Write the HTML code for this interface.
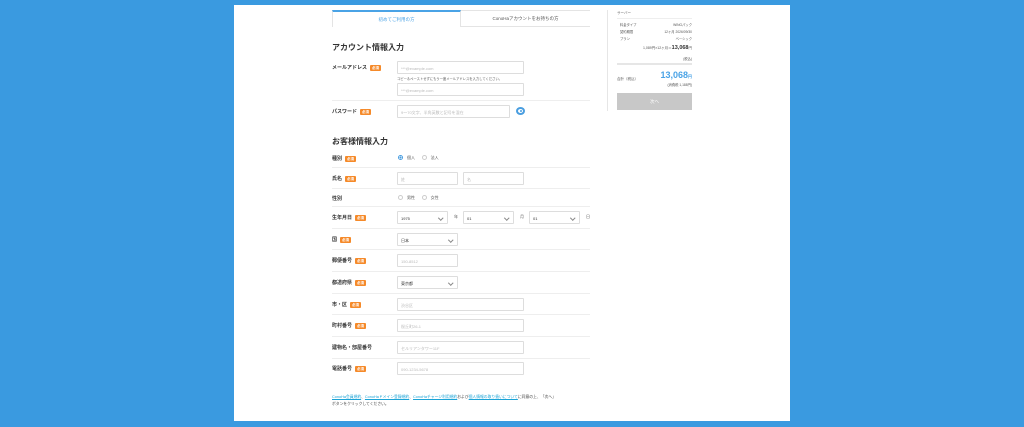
<!DOCTYPE html>
<html><head><meta charset="utf-8"><style>
*{margin:0;padding:0;box-sizing:border-box}
body{width:1024px;height:427px;background:#3a9ae0;position:relative;overflow:hidden;font-family:"Liberation Sans","Noto Sans CJK JP",sans-serif;color:#333}
.p{position:absolute;left:234px;top:5px;width:556px;height:416px;background:#fff}
.a{position:absolute;white-space:nowrap}
.lb{font-size:5px;font-weight:bold;color:#333}
.bd{display:inline-block;background:#f58a2a;color:#fff;font-size:3.5px;padding:1px 2px;margin-left:3px;border-radius:1px;vertical-align:middle;line-height:4px}
.in{position:absolute;height:13px;border:1px solid #ddd;border-radius:1px;font-size:4px;color:#bbb;padding:3.5px 3px;background:#fff}
.sel{color:#333}
.sel:after{content:"";position:absolute;right:5px;top:3.5px;width:2.5px;height:2.5px;border-right:1px solid #888;border-bottom:1px solid #888;transform:rotate(45deg)}
.hl{position:absolute;left:332px;width:258px;height:1px;background:#eee}
.h{font-size:8px;font-weight:bold;color:#333}
.rd{display:inline-block;width:5px;height:5px;border:1px solid #ccc;border-radius:50%;vertical-align:middle;margin-right:4px}
.sm{font-size:4px;color:#555}
.ln{color:#1ba3d6;text-decoration:underline}
</style></head><body>
<div class="p"></div>
<div class="a" style="left:332px;top:10px;width:129px;height:17px;border:1px solid #e4e4e4;border-top:2px solid #4aa3e6;border-bottom:none;font-size:4.5px;color:#4aa3e6;text-align:center;line-height:15px">初めてご利用の方</div>
<div class="a" style="left:461px;top:10px;width:129px;height:17px;border-top:1px solid #e4e4e4;border-bottom:1px solid #e4e4e4;font-size:4.5px;color:#555;text-align:center;line-height:16px;background:#fff">ConoHaアカウントをお持ちの方</div>
<div class="a h" style="left:332px;top:42px">アカウント情報入力</div>
<div class="a lb" style="left:332px;top:64px">メールアドレス<span class="bd">必須</span></div>
<div class="in" style="left:397px;top:61px;width:127px">***@example.com</div>
<div class="a" style="left:397px;top:76px;font-size:3.3px;color:#555">コピー＆ペーストせずにもう一度メールアドレスを入力してください。</div>
<div class="in" style="left:397px;top:83px;width:127px">***@example.com</div>
<div class="hl" style="top:100px"></div>
<div class="a lb" style="left:332px;top:108px">パスワード<span class="bd">必須</span></div>
<div class="in" style="left:397px;top:105px;width:113px">9～70文字、半角英数と記号を混在</div>
<div class="a" style="left:516px;top:107px;width:9px;height:8px;border-radius:50%;background:#4a9ee0"><div style="position:absolute;left:2px;top:2px;width:5px;height:4px;border-radius:50%;background:#fff"></div><div style="position:absolute;left:3.5px;top:3px;width:2px;height:2px;border-radius:50%;background:#4a9ee0"></div></div>
<div class="a h" style="left:332px;top:136px">お客様情報入力</div>

<div class="a lb" style="left:332px;top:155px">種別<span class="bd">必須</span></div>
<div class="a sm" style="left:398px;top:155px"><span class="rd" style="border:1.5px solid #4a9ee0;background:radial-gradient(#4a9ee0 40%,#fff 45%)"></span>個人&nbsp;&nbsp;&nbsp;&nbsp;&nbsp;&nbsp;<span class="rd"></span>法人</div>
<div class="hl" style="top:167px"></div>
<div class="a lb" style="left:332px;top:175px">氏名<span class="bd">必須</span></div>
<div class="in" style="left:397px;top:172px;width:61px">姓</div>
<div class="in" style="left:463px;top:172px;width:61px">名</div>
<div class="hl" style="top:188px"></div>
<div class="a lb" style="left:332px;top:195px">性別</div>
<div class="a sm" style="left:398px;top:195px"><span class="rd"></span>男性&nbsp;&nbsp;&nbsp;&nbsp;&nbsp;&nbsp;<span class="rd"></span>女性</div>
<div class="hl" style="top:206px"></div>
<div class="a lb" style="left:332px;top:214px">生年月日<span class="bd">必須</span></div>
<div class="in sel" style="left:397px;top:211px;width:51px">1975</div>
<div class="a sm" style="left:454px;top:214px">年</div>
<div class="in sel" style="left:463px;top:211px;width:51px">01</div>
<div class="a sm" style="left:520px;top:214px">月</div>
<div class="in sel" style="left:529px;top:211px;width:51px">01</div>
<div class="a sm" style="left:586px;top:214px">日</div>
<div class="hl" style="top:228px"></div>
<div class="a lb" style="left:332px;top:236px">国<span class="bd">必須</span></div>
<div class="in sel" style="left:397px;top:233px;width:61px">日本</div>
<div class="hl" style="top:249px"></div>
<div class="a lb" style="left:332px;top:257px">郵便番号<span class="bd">必須</span></div>
<div class="in" style="left:397px;top:254px;width:61px">150-8512</div>
<div class="hl" style="top:271px"></div>
<div class="a lb" style="left:332px;top:279px">都道府県<span class="bd">必須</span></div>
<div class="in sel" style="left:397px;top:276px;width:61px">東京都</div>
<div class="hl" style="top:293px"></div>
<div class="a lb" style="left:332px;top:301px">市・区<span class="bd">必須</span></div>
<div class="in" style="left:397px;top:298px;width:127px">渋谷区</div>
<div class="hl" style="top:314px"></div>
<div class="a lb" style="left:332px;top:322px">町村番号<span class="bd">必須</span></div>
<div class="in" style="left:397px;top:319px;width:127px">桜丘町26-1</div>
<div class="hl" style="top:336px"></div>
<div class="a lb" style="left:332px;top:344px">建物名・部屋番号</div>
<div class="in" style="left:397px;top:341px;width:127px">セルリアンタワー11F</div>
<div class="hl" style="top:358px"></div>
<div class="a lb" style="left:332px;top:365px">電話番号<span class="bd">必須</span></div>
<div class="in" style="left:397px;top:362px;width:127px">090-1234-5678</div>
<div class="a" style="left:332px;top:394px;font-size:3.8px;color:#444;line-height:7px"><span class="ln">ConoHa会員規約</span>、<span class="ln">ConoHaドメイン登録規約</span>、<span class="ln">ConoHaチャージ利用規約</span>および<span class="ln">個人情報の取り扱いについて</span>に同意の上、「次へ」<br>ボタンをクリックしてください。</div>

<div class="a" style="left:607px;top:10px;width:1px;height:101px;background:#e6e6e6"></div>
<div class="a" style="left:617px;top:11px;font-size:3.5px;color:#666">サーバー</div>
<div class="a" style="left:617px;top:18px;width:75px;height:1px;background:#eee"></div>
<div class="a" style="left:620px;top:22px;font-size:3.3px;color:#555;line-height:7px">料金タイプ<br>契約期間<br>プラン</div>
<div class="a" style="left:620px;top:22px;width:72px;text-align:right;font-size:3.3px;color:#555;line-height:7px">WINGパック<br>12ヶ月 2026/09/30<br>ベーシック</div>
<div class="a" style="left:617px;top:45px;width:75px;text-align:right;font-size:3.5px;color:#555">1,089円×12ヶ月＝<b style="font-size:5.5px;color:#333">13,068</b>円</div>
<div class="a" style="left:617px;top:56px;width:75px;text-align:right;font-size:3.3px;color:#555">(税込)</div>
<div class="a" style="left:617px;top:63px;width:75px;height:2px;background:#e6e6e6"></div>
<div class="a" style="left:617px;top:77px;font-size:3.5px;color:#555">合計（税込）</div>
<div class="a" style="left:617px;top:70px;width:75px;text-align:right;font-size:9px;font-weight:bold;color:#4aa3e6">13,068<span style="font-size:4px">円</span></div>
<div class="a" style="left:617px;top:82px;width:75px;text-align:right;font-size:3.3px;color:#555">(消費税 1,188円)</div>
<div class="a" style="left:617px;top:93px;width:75px;height:17px;background:#c8c8c8;color:#fff;font-size:4.5px;text-align:center;line-height:17px">次へ</div>
</body></html>
